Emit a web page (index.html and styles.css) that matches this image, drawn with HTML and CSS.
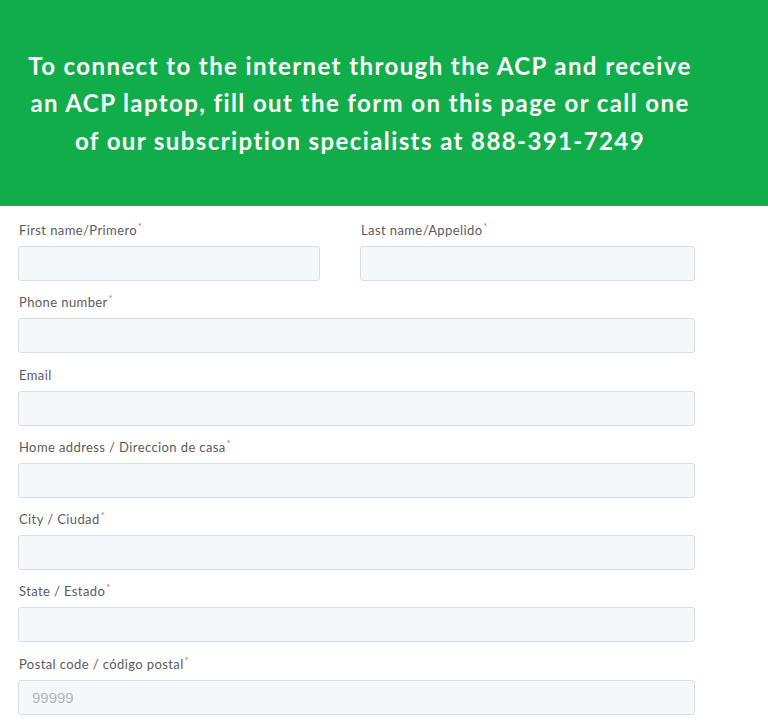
FILE: index.html
```html
<!DOCTYPE html>
<html lang="en">
<head>
    <meta charset="UTF-8">
    <meta name="viewport" content="width=device-width, initial-scale=1.0">
    <title>ACP Laptop Signup</title>
    <link rel="stylesheet" href="styles.css">
</head>
<body>
    <div class="banner">
        <h1 class="banner-text">
            To connect to the internet through the ACP and receive<br>
            an ACP laptop, fill out the form on this page or call one<br>
            of our subscription specialists at 888-391-7249
        </h1>
    </div>

    <form class="signup-form">
        <div class="field-row">
            <div class="field first">
                <label for="firstname">First name/Primero<span class="req">*</span></label>
                <input type="text" id="firstname">
            </div>
            <div class="field last">
                <label for="lastname">Last name/Appelido<span class="req">*</span></label>
                <input type="text" id="lastname">
            </div>
        </div>
        <div class="field">
            <label for="phone">Phone number<span class="req">*</span></label>
            <input type="tel" id="phone">
        </div>
        <div class="field">
            <label for="email">Email</label>
            <input type="email" id="email">
        </div>
        <div class="field">
            <label for="address">Home address / Direccion de casa<span class="req">*</span></label>
            <input type="text" id="address">
        </div>
        <div class="field">
            <label for="city">City / Ciudad<span class="req">*</span></label>
            <input type="text" id="city">
        </div>
        <div class="field">
            <label for="state">State / Estado<span class="req">*</span></label>
            <input type="text" id="state">
        </div>
        <div class="field">
            <label for="zip">Postal code / código postal<span class="req">*</span></label>
            <input type="text" id="zip" placeholder="99999">
        </div>
    </form>
</body>
</html>
```

FILE: styles.css
```css
body {
    margin: 0;
    background: #ffffff;
    font-family: 'Lato', 'Noto Sans', sans-serif;
}

.banner {
    background: #12ad4b;
    height: 206px;
    display: flex;
    align-items: center;
}

.banner-text {
    width: 720px;
    margin: 0;
    color: #ffffff;
    font-size: 24px;
    font-weight: 700;
    line-height: 37.5px;
    text-align: center;
    letter-spacing: 1.4px;
}

.signup-form {
    padding: 16px 0 0 18px;
    width: 677px;
}

.field-row {
    display: grid;
    grid-template-columns: 302px 335px;
    column-gap: 40px;
}

.field {
    display: flex;
    flex-direction: column;
    margin-bottom: 13.3px;
}

.field label {
    font-size: 13px;
    color: #5c5c5c;
    height: 17px;
    line-height: 17px;
    padding-left: 1px;
    margin-bottom: 7px;
    letter-spacing: 0.4px;
}

.req {
    color: #f2545b;
    font-size: 9px;
    vertical-align: top;
    line-height: 10px;
    margin-left: 1px;
}

.field input {
    box-sizing: border-box;
    height: 35px;
    width: 100%;
    margin: 0;
    padding: 0 13px;
    background: #f5f8fa;
    border: 1px solid #d7dfe6;
    border-radius: 3px;
    font-family: 'Liberation Sans', Arial, sans-serif;
    font-size: 15px;
    color: #33475b;
}

.field input::placeholder {
    color: #b5b5b5;
}
```
